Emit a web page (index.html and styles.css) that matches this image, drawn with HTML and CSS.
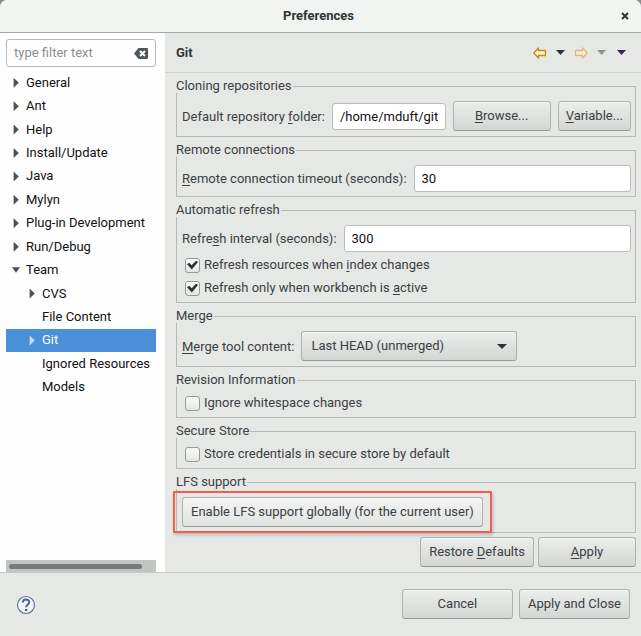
FILE: index.html
```html
<!DOCTYPE html>
<html lang="en">
<head>
<meta charset="utf-8">
<title>Preferences</title>
<link rel="stylesheet" href="styles.css">
</head>
<body>
<div class="window">
  <header class="titlebar">
    <h1>Preferences</h1>
    <button class="close" type="button" aria-label="Close"><svg width="8" height="8" viewBox="0 0 8 8"><path d="M1 1l6 6M7 1l-6 6" stroke="#2e3436" stroke-width="2"/></svg></button>
  </header>
  <div class="main">
    <nav class="sidebar">
      <div class="filter">
        <input type="text" placeholder="type filter text" aria-label="Filter">
        <button type="button" aria-label="Clear filter"><svg width="14" height="11" viewBox="0 0 14 11"><path d="M0 5.5L4.500 0H13q1 0 1 1v9q0 1-1 1H4.500z" fill="#50575a"/><path d="M6 3l5 5M11 3l-5 5" stroke="#fff" stroke-width="2"/></svg></button>
      </div>
      <ul class="tree">
        <li><i class="closed"></i>General</li>
        <li><i class="closed"></i>Ant</li>
        <li><i class="closed"></i>Help</li>
        <li><i class="closed"></i>Install/Update</li>
        <li><i class="closed"></i>Java</li>
        <li><i class="closed"></i>Mylyn</li>
        <li><i class="closed"></i>Plug-in Development</li>
        <li><i class="closed"></i>Run/Debug</li>
        <li><i class="open"></i>Team</li>
        <li class="child"><i class="closed"></i>CVS</li>
        <li class="child"><i></i>File Content</li>
        <li class="child selected"><i class="closed"></i>Git</li>
        <li class="child"><i></i>Ignored Resources</li>
        <li class="child"><i></i>Models</li>
      </ul>
      <div class="scrollbar"><div class="thumb"></div></div>
    </nav>
    <form class="page">
      <div class="pagehead">
        <h2>Git</h2>
        <div class="nav">
          <button type="button" aria-label="Back"><svg width="14" height="12" viewBox="0 0 14 12"><path d="M.8 6L5.500 1v2.500H12.500v5H5.500V11z" fill="#fdf3c0" stroke="#c68a1e" stroke-width="1.300" stroke-linejoin="round"/></svg></button>
          <button type="button" aria-label="Back history"><svg width="9" height="5" viewBox="0 0 9 5"><path d="M0 0h9L4.500 5z" fill="#2e3436"/></svg></button>
          <button type="button" aria-label="Forward"><svg width="14" height="12" viewBox="0 0 14 12"><path d="M13.200 6L8.500 1v2.500H1.500v5H8.500V11z" fill="#f6ecd2" stroke="#dcb97e" stroke-width="1.300" stroke-linejoin="round"/></svg></button>
          <button type="button" aria-label="Forward history"><svg width="9" height="5" viewBox="0 0 9 5"><path d="M0 0h9L4.500 5z" fill="#8f9392"/></svg></button>
          <button class="menu" type="button" aria-label="Menu"><svg width="9" height="5" viewBox="0 0 9 5"><path d="M0 0h9L4.500 5z" fill="#3b1d63"/></svg></button>
        </div>
      </div>
      <div class="groups">
        <fieldset>
          <legend>Cloning repositories</legend>
          <div class="row">
            <label for="folder">Default repository <u>f</u>older:</label>
            <input class="field" type="text" id="folder" value="/home/mduft/git">
            <button class="btn wide" type="button"><u>B</u>rowse...</button>
            <button class="btn" type="button"><u>V</u>ariable...</button>
          </div>
        </fieldset>
        <fieldset>
          <legend>Remote connections</legend>
          <div class="row">
            <label for="timeout"><u>R</u>emote connection timeout (seconds):</label>
            <input class="field" type="text" id="timeout" value="30">
          </div>
        </fieldset>
        <fieldset>
          <legend>Automatic refresh</legend>
          <div class="row">
            <label for="interval">Refre<u>s</u>h interval (seconds):</label>
            <input class="field" type="text" id="interval" value="300">
          </div>
          <label class="check"><input type="checkbox" checked><span>Refresh resources when <u>i</u>ndex changes</span></label>
          <label class="check"><input type="checkbox" checked><span>Refresh only when workbench is <u>a</u>ctive</span></label>
        </fieldset>
        <fieldset>
          <legend>Merge</legend>
          <div class="row">
            <label for="merge"><u>M</u>erge tool content:</label>
            <div class="combo">
              <select class="btn" id="merge"><option>Last HEAD (unmerged)</option></select>
              <svg width="10" height="5" viewBox="0 0 10 5"><path d="M0 0h10L5 5z" fill="#2e3436"/></svg>
            </div>
          </div>
        </fieldset>
        <fieldset>
          <legend>Revision Information</legend>
          <label class="check"><input type="checkbox"><span>Ignore whitespace changes</span></label>
        </fieldset>
        <fieldset>
          <legend>Secure Store</legend>
          <label class="check"><input type="checkbox"><span>Store credentials in secure store by default</span></label>
        </fieldset>
        <fieldset>
          <legend>LFS support</legend>
          <div class="marked"><button class="btn roomy light" type="button">Enable LFS support globally (for the current user)</button></div>
        </fieldset>
      </div>
      <div class="actions">
        <button class="btn roomy" type="button">Restore <u>D</u>efaults</button>
        <button class="btn wide" type="button"><u>A</u>pply</button>
      </div>
    </form>
  </div>
  <footer class="footer">
    <button class="help" type="button" aria-label="Help"><svg width="20" height="20" viewBox="0 0 20 20"><circle cx="10" cy="10" r="8.500" fill="#f3f5f6" stroke="#61749a" stroke-width="1.200"/><path d="M6.800 7.600C6.800 3.300 13.200 3.500 13.200 7.200C13.200 9.500 10.200 9.600 10.200 12.300" fill="none" stroke="#4c6391" stroke-width="2"/><circle cx="10.200" cy="15" r="1.300" fill="#4c6391"/></svg></button>
    <div class="final">
      <button class="btn roomy" type="button">Cancel</button>
      <button class="btn roomy" type="button">Apply and Close</button>
    </div>
  </footer>
</div>
</body>
</html>
```
FILE: styles.css
```css
* { box-sizing: border-box; }
body { margin: 0; background: #8b8e8f; color: #3a4043; font: 13px/16px Roboto, "Noto Sans", sans-serif; }
button, input, select { font: inherit; color: inherit; margin: 0; }
button { border: 0; padding: 0; background: none; }
h1, h2 { margin: 0; font-size: 13px; color: #2e3436; }
svg { display: block; }
u { text-underline-offset: 2px; }

.window { min-height: 100vh; display: flex; flex-direction: column; background: #e6e8e6; border-radius: 7px 7px 0 0; overflow: hidden; }
.titlebar { display: grid; grid-template-columns: 1fr auto 1fr; align-items: center; height: 33px; padding: 0 12px 0 8px; background: #f2f4f2; border-bottom: 1px solid #a5a8a6; }
.titlebar h1 { grid-column: 2; }
.close { justify-self: end; }
.main { display: flex; flex: 1; }

.sidebar { display: flex; flex-direction: column; width: 165px; padding: 6px 9px 0 6px; background: #fefefe; color: #111; }
.filter { display: flex; align-items: center; height: 28px; padding: 0 7px; border: 1px solid #b5b8b5; border-radius: 3px; }
.filter input { flex: 1; min-width: 0; border: 0; padding: 0; background: none; outline: 0; }
.filter input::placeholder { color: #8b8e8f; opacity: 1; }
.tree { display: grid; grid-template-columns: minmax(0, 1fr); grid-auto-rows: 1fr; height: 328px; margin: 4px 0 0; padding: 0; list-style: none; white-space: nowrap; }
.tree li { display: flex; align-items: center; gap: 6px; padding-left: 6px; }
.tree .child { padding-left: 22px; }
.tree i { flex: none; width: 8px; height: 10px; background: #4d5254; clip-path: polygon(0 0, 0 0, 0 0); }
.tree .closed { clip-path: polygon(20% 0, 85% 50%, 20% 100%); }
.tree .open { clip-path: polygon(0 20%, 100% 20%, 50% 75%); }
.tree .selected { background: #4a90d9; color: #fff; }
.tree .selected i { background: #c9def4; }
.scrollbar { margin-top: auto; height: 12px; padding: 4px 14px 3px 3px; background: #c3c5c3; }
.thumb { height: 5px; border-radius: 3px; background: #777b7c; }

.page { flex: 1; display: flex; flex-direction: column; min-width: 0; }
.pagehead { display: flex; justify-content: space-between; align-items: center; height: 40px; padding: 0 15px 0 11px; border-bottom: 1px solid #cccfcc; }
.nav { display: flex; align-items: center; gap: 9px; }
.nav .menu { margin-left: 2px; }
.groups { display: flex; flex-direction: column; gap: 6px; padding: 6px 5px 0 11px; }
fieldset { min-width: 0; margin: 0; padding: 8px 4px 4px 5px; border: 1px solid #b6b9b6; }
legend { margin-left: -6px; padding: 0 1px 0 0; line-height: 14px; background: #e6e8e6; }
.row { display: flex; align-items: center; gap: 7px; white-space: nowrap; }
.field { flex: 1; min-width: 0; height: 27px; padding: 0 7px; background: #fff; border: 1px solid #babdba; border-radius: 3px; color: #111; }
.btn { height: 30px; margin-bottom: 1px; padding: 0 7px; border: 1px solid #aeb1ae; border-bottom-color: #979a97; border-radius: 3px; background: linear-gradient(#eceeec, #d3d6d3); box-shadow: inset 0 1px #f3f4f3; }
.roomy { padding: 0 8px; }
.light { background: linear-gradient(#f3f4f3, #e2e4e2); }
.wide { width: 98px; }
.check { display: flex; align-items: center; gap: 4px; height: 20px; margin-top: 3px; padding-left: 3px; }
legend + .check { margin-top: -2px; }
.check input { appearance: none; width: 15px; height: 15px; border: 1px solid #969a97; border-radius: 3px; background: linear-gradient(#fafbfa, #e4e6e4); }
.check input:checked { position: relative; }
.check input:checked::after { content: ""; position: absolute; inset: 2px 1px; background: #2e3436; clip-path: polygon(0 42%, 20% 26%, 42% 52%, 84% 0, 100% 16%, 44% 100%); }
.combo { position: relative; width: 216px; }
.combo select { display: block; appearance: none; width: 100%; padding-left: 9px; }
.combo svg { position: absolute; right: 10px; top: 13px; pointer-events: none; }
.marked { position: relative; width: max-content; }
.marked .btn { display: block; }
.marked::after { content: ""; position: absolute; inset: -6px -9px; border: 2px solid #f0604a; box-shadow: 1px 2px 3px #0003; pointer-events: none; }
.actions { display: flex; justify-content: flex-end; gap: 4px; padding: 4px 5px 0; }

.footer { display: flex; justify-content: space-between; align-items: center; height: 64px; padding: 0 11px 0 16px; border-top: 1px solid #c6c9c6; }
.final { display: grid; grid-template-columns: 1fr 1fr; gap: 6px; }
```
